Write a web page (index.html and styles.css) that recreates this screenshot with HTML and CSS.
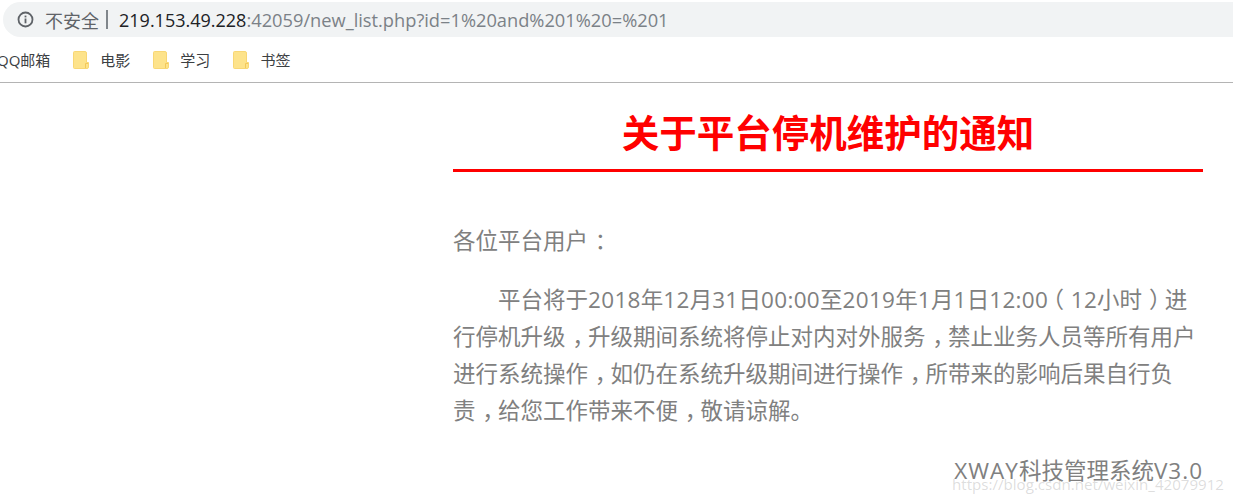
FILE: index.html
```html
<!DOCTYPE html>
<html lang="zh">
<head>
<meta charset="utf-8">
<title>关于平台停机维护的通知</title>
<link rel="stylesheet" href="styles.css">
</head>
<body>
<header class="chrome">
  <div class="omnibox">
    <svg class="info" width="17" height="17" viewBox="0 0 17 17"><circle cx="8.500" cy="8.500" r="7" fill="none" stroke="#5f6368" stroke-width="1.800"/><rect x="7.600" y="7.500" width="1.800" height="4.800" fill="#5f6368"/><rect x="7.600" y="4.600" width="1.800" height="1.800" fill="#5f6368"/></svg>
    <span class="insecure">不安全</span>
    <span class="sep"></span>
    <span class="url"><span class="host">219.153.49.228</span>:42059/new_list.php?id=1%20and%201%20=%201</span>
  </div>
  <nav class="bookmarks">
    <span class="bm">QQ邮箱</span>
    <span class="bm"><svg class="folder" width="16" height="18" viewBox="0 0 16 18"><path d="M1.5 0.5H12a1.5 1.5 0 0 1 1.5 1.500V11.500H15.500V16a1.500 1.500 0 0 1-1.500 1.500H1.500A1 1 0 0 1 .5 16.500V1.500A1 1 0 0 1 1.500 .5Z" fill="#fde38b" stroke="#f8d775"/><path d="M12.500 17V12.500H15" fill="none" stroke="#f3c95c"/></svg>电影</span>
    <span class="bm"><svg class="folder" width="16" height="18" viewBox="0 0 16 18"><path d="M1.5 0.5H12a1.5 1.5 0 0 1 1.5 1.500V11.500H15.500V16a1.500 1.500 0 0 1-1.500 1.500H1.500A1 1 0 0 1 .5 16.500V1.500A1 1 0 0 1 1.500 .5Z" fill="#fde38b" stroke="#f8d775"/><path d="M12.500 17V12.500H15" fill="none" stroke="#f3c95c"/></svg>学习</span>
    <span class="bm"><svg class="folder" width="16" height="18" viewBox="0 0 16 18"><path d="M1.5 0.5H12a1.5 1.5 0 0 1 1.5 1.500V11.500H15.500V16a1.500 1.500 0 0 1-1.500 1.500H1.500A1 1 0 0 1 .5 16.500V1.500A1 1 0 0 1 1.500 .5Z" fill="#fde38b" stroke="#f8d775"/><path d="M12.500 17V12.500H15" fill="none" stroke="#f3c95c"/></svg>书签</span>
  </nav>
</header>
<main class="notice">
  <h1 class="title">关于平台停机维护的通知</h1>
  <p class="greet">各位平台用户<span class="mid">：</span></p>
  <p class="body">平台将于<span class="num">2018</span>年<span class="num">12</span>月<span class="num">31</span>日<span class="num">00:00</span>至<span class="num">2019</span>年<span class="num">1</span>月<span class="num">1</span>日<span class="num">12:00</span><span class="open">（</span><span class="num">12</span>小时<span class="mid">）</span>进行停机升级<span class="mid">，</span>升级期间系统将停止对内对外服务<span class="mid">，</span>禁止业务人员等所有用户进行系统操作<span class="mid">，</span>如仍在系统升级期间进行操作<span class="mid">，</span>所带来的影响后果自行负责<span class="mid">，</span>给您工作带来不便<span class="mid">，</span>敬请谅解。</p>
  <p class="sign"><span class="wide">XWAY</span>科技管理系统<span class="wide">V3.0</span></p>
</main>
<div class="watermark">https://blog.csdn.net/weixin_42079912</div>
</body>
</html>
```
FILE: styles.css
```css
* { box-sizing: border-box; }
html, body { margin: 0; padding: 0; }
body {
  width: 1233px;
  height: 502px;
  overflow: hidden;
  background: #fff;
  position: relative;
  font-family: "Open Sans", "Noto Sans CJK SC", sans-serif;
  text-spacing-trim: space-all;
}
.chrome {
  height: 83px;
  padding-top: 2px;
  border-bottom: 1px solid #b4b4b4;
}
.omnibox {
  height: 35px;
  margin-left: 3px;
  padding-left: 14px;
  border-radius: 18px 0 0 18px;
  background: #f1f3f4;
  display: flex;
  align-items: center;
}
.info { flex: none; }
.insecure { margin-left: 11px; font-size: 18px; color: #5f6368; }
.sep { width: 2px; height: 19px; margin: 0 11px 0 7px; background: #80868b; }
.url { font-size: 18.250px; color: #7b8187; white-space: nowrap; }
.host { color: #202124; font-size: 18px; }
.bookmarks {
  height: 45px;
  display: flex;
  align-items: center;
  gap: 22px;
  margin-left: -3px;
}
.bm {
  display: flex;
  align-items: center;
  font-size: 15px;
  color: #3c4043;
  white-space: nowrap;
}
.folder { margin: 0 11px 0 1px; flex: none; }
.notice {
  width: 750px;
  margin-left: 453px;
  color: #808080;
  font-size: 22.500px;
  line-height: 37px;
}
.title {
  margin: 0;
  height: 89px;
  padding-top: 24px;
  border-bottom: 3px solid #f00;
  color: #f00;
  font-size: 37.500px;
  line-height: 52px;
  font-weight: 700;
  text-align: center;
}
.greet { margin: 50px 0 0; }
.body { margin: 22px 0 0; text-indent: 45px; }
.num { letter-spacing: 0.320px; }
.mid { margin-left: 0.300em; margin-right: -0.300em; }
.open { margin-left: -0.300em; margin-right: 0.300em; }
.sign { margin: 23px 0 0; text-align: right; }
.wide { letter-spacing: 1px; }
.watermark {
  position: absolute;
  right: 9px;
  top: 474px;
  font-size: 15.100px;
  line-height: 20px;
  color: rgba(150, 150, 150, 0.32);
}
```
